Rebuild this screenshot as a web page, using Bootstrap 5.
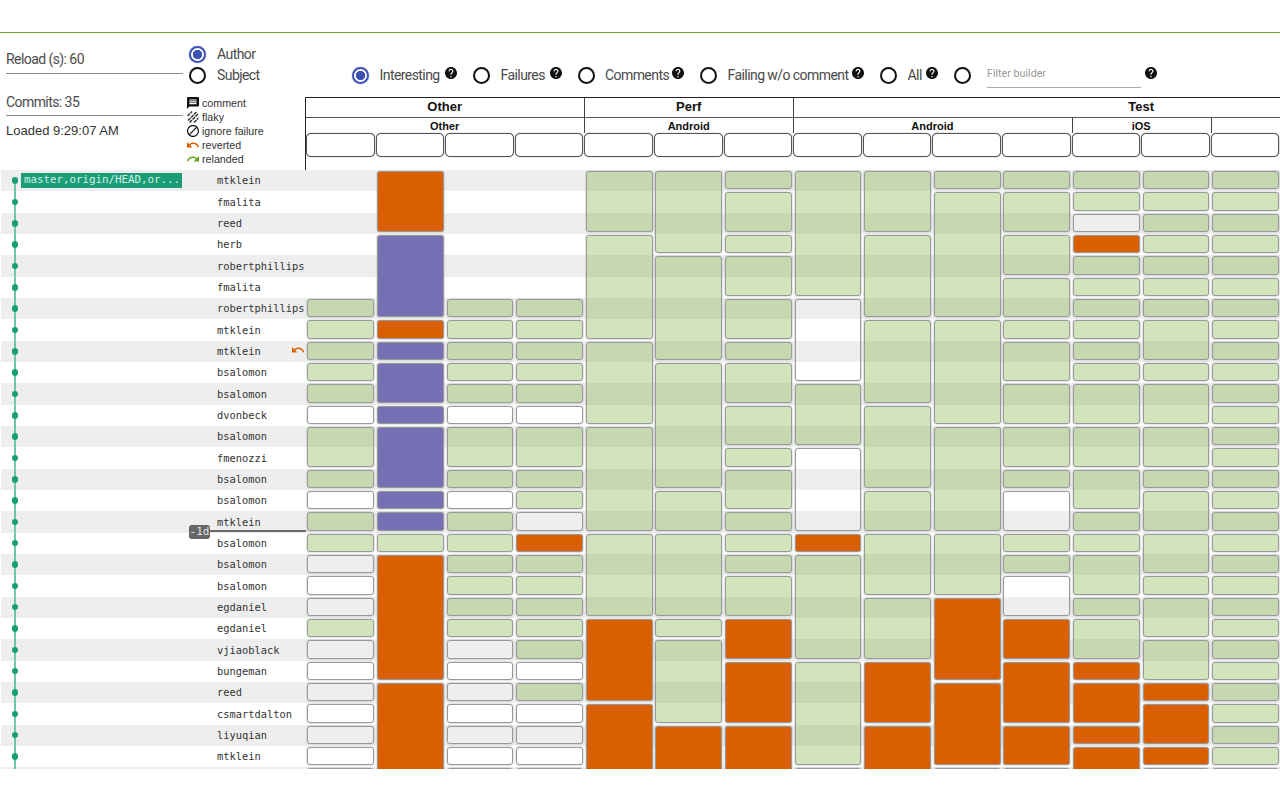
<!DOCTYPE html>
<html lang="en">
<head>
  <meta charset="UTF-8">
  <title>Status</title>
  <link href="https://cdn.jsdelivr.net/npm/bootstrap@5.3.3/dist/css/bootstrap.min.css" rel="stylesheet">
  <style>
    html, body { overflow: hidden; background: #fff; }
    body { font-family: Roboto, sans-serif; font-size: 14px; letter-spacing: -.57px; color: #4a4a4a; }
    .topbar { height: 33px; border-bottom: 1px solid #66a61e; }
    .dash { height: 736px; width: 1279px; margin-left: 1px; overflow: hidden; }
    .head { height: 137px; }
    .meta-col { width: 185px; flex: none; }
    .stat { margin: 0 3px 0 5px; line-height: 20px; border-bottom: 1px solid #8a8a8a; }
    .stat-reload { margin-top: 16px; padding-bottom: 4px; }
    .stat-commits { margin-top: 18px; padding-bottom: 3px; }
    .stat-loaded { margin: 5px 0 0 5px; font: 13px/20px "Liberation Sans", sans-serif; letter-spacing: 0; color: #333; }
    .legend-col { width: 119px; flex: none; }
    .sort-group { padding: 10.5px 0 0 3px; height: 63px; }
    .sort-group label, .filter-row label { cursor: pointer; }
    .opt { height: 21px; gap: 11px; }
    .legend-line { height: 14px; gap: 3px; font: 10.7px/14px "Liberation Sans", sans-serif; letter-spacing: 0; color: #333; padding-left: 1px; }
    .legend-line svg { width: 12px; height: 12px; flex: none; }
    .form-check-input.dot { width: 17px; height: 17px; margin: 0; flex: none; border: 2px solid #111; background: #fff; box-shadow: none; }
    .form-check-input.dot:checked { border-color: #3f51b5; background: radial-gradient(circle, #3f51b5 0 4.4px, #fff 5px); box-shadow: 0 0 1px #3f51b5; }
    .right-col { min-width: 0; flex: none; width: 1000px; }
    .filter-row { height: 64px; padding: 20px 0 0 47px; }
    .filter-item { gap: 10.5px; flex: none; white-space: nowrap; }
    .filter-end { margin-right: 16px; }
    .help { width: 12px; height: 12px; flex: none; margin: 0 16px 4px 0; fill: #111; }
    .help-last { margin: 0 0 4px 4px; }
    .filter-box { width: 154px; height: 28px; padding: 0; margin-bottom: 3px; border: 0; border-bottom: 1px solid #aaa; border-radius: 0; font-size: 10.7px; letter-spacing: 0; color: #333; box-shadow: none; }
    .filter-box::placeholder { color: #999; }
    .colhead { display: grid; grid-template-columns: repeat(17, 69.6px); grid-template-rows: 20px 15px 24px; height: 73px; border-left: 1px solid #222; border-top: 1px solid #222; font-family: "Liberation Sans", sans-serif; font-weight: 700; letter-spacing: 0; color: #111; width: 1200px; }
    .grp-a { font-size: 13px; line-height: 18px; text-align: center; border-bottom: 1px solid #555; padding-right: 1px; }
    .grp-b { font-size: 11px; line-height: 17px; text-align: center; padding-right: 1px; }
    .cut { border-left: 1px solid #444; }
    .bld { margin: 0 1px 0 0; height: 24px; border: 1.5px solid #555; border-radius: 5px; background: #fff; box-shadow: 0 0 1px #555; }
    .board { display: grid; grid-template-columns: 305.4px repeat(14, 69.6px); grid-auto-rows: 21.333px; width: 1400px; letter-spacing: 0; }
    .strip { grid-column: 1 / -1; }
    .strip-even { background: #eee; }
    .who { grid-column: 1; display: flex; align-items: center; position: relative; min-width: 0; }
    .lane { width: 28px; height: 100%; flex: none; display: flex; align-items: center; justify-content: center; background: linear-gradient(#6ec5ab, #6ec5ab) center / 2px 100% no-repeat; }
    .lane-first { background: linear-gradient(#6ec5ab, #6ec5ab) center bottom / 2px 50% no-repeat; }
    .lane i { width: 6.5px; height: 6.5px; border-radius: 50%; background: #1b9e77; }
    .branch-slot { width: 196px; flex: none; margin-left: -8px; }
    .branch { width: 161px; height: 14.5px; background: #1b9e77; color: #d3eee4; font: 10.8px/14.5px "DejaVu Sans Mono", monospace; padding-left: 3px; white-space: nowrap; overflow: hidden; }
    .author { font: 10.4px/1 "DejaVu Sans Mono", monospace; color: #333; white-space: nowrap; }
    .undo { position: absolute; right: 2px; top: 3px; width: 12px; height: 12px; fill: #d95f02; }
    .daymark { position: absolute; left: 188px; right: 0; bottom: -6.5px; display: flex; align-items: center; z-index: 2; }
    .daymark span { background: #666; color: #e4e4e4; font: 11px/14px "DejaVu Sans Mono", monospace; border-radius: 3px; width: 21px; text-align: center; flex: none; }
    .daymark b { flex: 1; height: 2px; margin-top: -2px; background: #6a6a6a; }
    .cell { margin: 1px 1.7px 2px 1px; border: 1px solid #999; border-radius: 3px; box-shadow: 0 0 1.5px #888; min-width: 0; }
    .st-g { background: rgba(102, 166, 30, .3); }
    .st-o { background: #d95f02; }
    .st-p { background: #7570b3; }
    .st-w { background: transparent; }
  </style>
</head>
<body>
  <svg width="0" height="0" class="d-block">
    <symbol id="i-help" viewBox="2 2 20 20"><path d="M12 2C6.48 2 2 6.48 2 12s4.48 10 10 10 10-4.48 10-10S17.52 2 12 2zm1 17h-2v-2h2v2zm2.07-7.75l-.9.92C13.45 12.9 13 13.5 13 15h-2v-.5c0-1.1.45-2.1 1.17-2.83l1.24-1.26c.37-.36.59-.86.59-1.41 0-1.1-.9-2-2-2s-2 .9-2 2H8c0-2.21 1.79-4 4-4s4 1.79 4 4c0 .88-.36 1.68-.93 2.25z"/></symbol>
    <symbol id="i-undo" viewBox="2 2 20 20"><path d="M12.5 8c-2.65 0-5.05.99-6.9 2.6L2 7v9h9l-3.62-3.62c1.39-1.16 3.16-1.88 5.12-1.88 3.54 0 6.55 2.31 7.6 5.5l2.37-.78C21.08 11.03 17.15 8 12.5 8z"/></symbol>
  </svg>

  <div class="topbar"></div>

  <main class="dash">
    <div class="head d-flex">
      <div class="meta-col">
        <div class="stat stat-reload">Reload (s): 60</div>
        <div class="stat stat-commits">Commits: 35</div>
        <div class="stat-loaded">Loaded 9:29:07 AM</div>
      </div>

      <div class="legend-col">
        <div class="sort-group">
          <label class="opt d-flex align-items-center"><input class="form-check-input dot" type="radio" name="sort" checked>Author</label>
          <label class="opt d-flex align-items-center"><input class="form-check-input dot" type="radio" name="sort">Subject</label>
        </div>
        <div class="legend-line d-flex align-items-center">
          <svg viewBox="2 2 20 20" fill="#111"><path d="M20 2H4c-1.1 0-1.99.9-1.99 2L2 22l4-4h14c1.1 0 2-.9 2-2V4c0-1.1-.9-2-2-2zm-2 12H6v-2h12v2zm0-3H6V9h12v2zm0-3H6V6h12v2z"/></svg>comment
        </div>
        <div class="legend-line d-flex align-items-center">
          <svg viewBox="0 0 24 24" stroke="#333" stroke-width="3" stroke-dasharray="7 1.5"><path d="M1 10 10 1M2 19 19 2M5 23 23 5M14 23 23 14"/></svg>flaky
        </div>
        <div class="legend-line d-flex align-items-center">
          <svg viewBox="2 2 20 20" fill="#111"><path d="M12 2C6.48 2 2 6.48 2 12s4.48 10 10 10 10-4.48 10-10S17.52 2 12 2zM4 12c0-4.42 3.58-8 8-8 1.85 0 3.55.63 4.9 1.69L5.69 16.9C4.63 15.55 4 13.85 4 12zm8 8c-1.85 0-3.55-.63-4.9-1.69L18.31 7.1C19.37 8.45 20 10.15 20 12c0 4.42-3.58 8-8 8z"/></svg>ignore failure
        </div>
        <div class="legend-line d-flex align-items-center">
          <svg viewBox="2 2 20 20" fill="#d95f02"><path d="M12.5 8c-2.65 0-5.05.99-6.9 2.6L2 7v9h9l-3.62-3.62c1.39-1.16 3.16-1.88 5.12-1.88 3.54 0 6.55 2.31 7.6 5.5l2.37-.78C21.08 11.03 17.15 8 12.5 8z"/></svg>reverted
        </div>
        <div class="legend-line d-flex align-items-center">
          <svg viewBox="2 2 20 20" fill="#66a61e"><path d="M18.4 10.6C16.55 8.99 14.15 8 11.5 8c-4.65 0-8.58 3.03-9.96 7.22L3.9 16c1.05-3.19 4.05-5.5 7.6-5.5 1.95 0 3.73.72 5.12 1.88L13 16h9V7l-3.6 3.6z"/></svg>relanded
        </div>
      </div>

      <div class="right-col">
        <div class="filter-row d-flex align-items-center" id="filters"></div>
        <div class="colhead" id="colhead"></div>
      </div>
    </div>

    <div class="board" id="board"></div>
  </main>

  <script>
    // filter radios: [label, width of radio + label]
    const filters = [['Interesting', 93], ['Failures', 76.5], ['Comments', 94.5], ['Failing w/o comment', 152], ['All', 46]];
    let filterHtml = '';
    filters.forEach(([f, w], i) => {
      filterHtml += `<label class="filter-item d-flex align-items-center" style="width:${w}px"><input class="form-check-input dot" type="radio" name="filter" ${i === 0 ? 'checked' : ''}>${f}</label><svg class="help"><use href="#i-help"/></svg>`;
    });
    filterHtml += `<label class="filter-item filter-end d-flex align-items-center"><input class="form-check-input dot" type="radio" name="filter"></label>`;
    filterHtml += `<input class="form-control filter-box" placeholder="Filter builder">`;
    filterHtml += `<svg class="help help-last"><use href="#i-help"/></svg>`;
    document.getElementById('filters').innerHTML = filterHtml;

    // column headers: [label, span]
    const groups = [['Other', 4], ['Perf', 3], ['Test', 10]];
    const subs = [['Other', 4], ['Android', 3], ['Android', 4], ['iOS', 2], ['', 4]];
    const colhead = document.getElementById('colhead');
    let col = 1;
    groups.forEach(([name, span], i) => {
      const d = document.createElement('div');
      d.className = 'grp-a' + (i ? ' cut' : '');
      d.style.gridColumn = `${col} / span ${span}`;
      d.textContent = name;
      colhead.appendChild(d);
      col += span;
    });
    col = 1;
    subs.forEach(([name, span], i) => {
      const d = document.createElement('div');
      d.className = 'grp-b' + (i ? ' cut' : '');
      d.style.gridColumn = `${col} / span ${span}`;
      d.textContent = name;
      colhead.appendChild(d);
      col += span;
    });
    for (let c = 1; c <= 17; c++) {
      const d = document.createElement('div');
      d.className = 'bld';
      colhead.appendChild(d);
    }

    // commits, the last row only peeks in at the bottom edge
    const authors = ['mtklein', 'fmalita', 'reed', 'herb', 'robertphillips', 'fmalita', 'robertphillips', 'mtklein', 'mtklein', 'bsalomon', 'bsalomon', 'dvonbeck', 'bsalomon', 'fmenozzi', 'bsalomon', 'bsalomon', 'mtklein', 'bsalomon', 'bsalomon', 'bsalomon', 'egdaniel', 'egdaniel', 'vjiaoblack', 'bungeman', 'reed', 'csmartdalton', 'liyuqian', 'mtklein', ''];

    // one string per task column, top to bottom: status letter + rows covered
    const columns = [
      'n6 g g g g g w g2 g w g g w w w g w w w w w w w',
      'o3 p4 o p p2 p p3 p p g o6 o6',
      'n6 g g g g g w g2 g w g g g g g g w w w w w w w',
      'n6 g g g g g w g2 g g w o g g g g g w g w w w w',
      'g3 g5 g4 g5 g4 o4 o6',
      'g4 g5 g6 g2 g4 g g4 o6',
      'g g2 g g2 g2 g g2 g2 g g2 g g g g2 o2 o3 o6',
      'g6 w4 g3 w4 o g5 g5 w',
      'g3 g4 g4 g4 g2 g3 g3 o3 o6',
      'g g6 g5 g5 g3 o4 o4 w',
      'g g2 g2 g2 g g2 g2 g2 g w2 g g w2 o2 o3 o2 w',
      'g g w o g g g g g g g2 g2 g2 g g g2 g g2 o o2 o o4',
      'g g g g g g g g2 g g2 g2 g g2 g2 g g2 g2 o o2 o g',
      'g g g g g g g g g g g g g g g g g g g g g g g g g g g g g'
    ];

    const board = document.getElementById('board');

    authors.forEach((name, r) => {
      const strip = document.createElement('div');
      strip.className = 'strip' + (r % 2 === 0 ? ' strip-even' : '');
      strip.style.gridRow = r + 1;
      board.appendChild(strip);
    });

    authors.forEach((name, r) => {
      const who = document.createElement('div');
      who.className = 'who';
      who.style.gridRow = r + 1;
      const branch = r === 0 ? '<div class="branch">master,origin/HEAD,or...</div>' : '';
      let extra = '';
      if (r === 8) extra = '<svg class="undo"><use href="#i-undo"/></svg>';
      if (r === 16) extra = '<div class="daymark"><span>-1d</span><b></b></div>';
      who.innerHTML = `<div class="lane ${r === 0 ? 'lane-first' : ''}"><i></i></div><div class="branch-slot">${branch}</div><div class="author">${name}</div>${extra}`;
      board.appendChild(who);
    });

    columns.forEach((spec, c) => {
      let row = 1;
      spec.split(' ').forEach(tok => {
        const kind = tok[0];
        const len = parseInt(tok.slice(1) || '1', 10);
        if (kind !== 'n') {
          const t = document.createElement('div');
          t.className = 'cell st-' + kind;
          t.style.gridColumn = c + 2;
          t.style.gridRow = `${row} / span ${len}`;
          board.appendChild(t);
        }
        row += len;
      });
    });
  </script>
  <script src="https://cdn.jsdelivr.net/npm/bootstrap@5.3.3/dist/js/bootstrap.bundle.min.js"></script>
</body>
</html>
